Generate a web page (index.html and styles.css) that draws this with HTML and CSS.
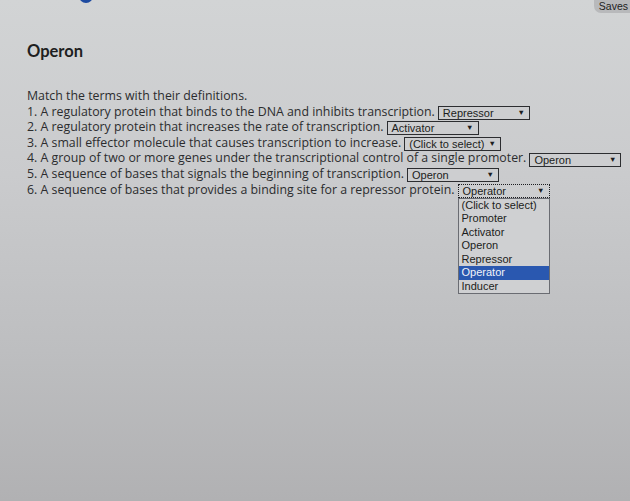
FILE: index.html
```html
<!DOCTYPE html>
<html>
<head>
<meta charset="utf-8">
<link rel="stylesheet" href="styles.css">
</head>
<body>
<div class="topbar">
  <div class="logo"></div>
  <div class="saved">Saves</div>
</div>
<main class="content">
  <h1 class="title">Operon</h1>
  <div class="question">
    <p class="line">Match the terms with their definitions.</p>
    <p class="line"><span>1. A regulatory protein that binds to the DNA and inhibits transcription.</span><span class="sel">Repressor<span class="arrow">&#9660;</span></span></p>
    <p class="line"><span>2. A regulatory protein that increases the rate of transcription.</span><span class="sel">Activator<span class="arrow">&#9660;</span></span></p>
    <p class="line"><span>3. A small effector molecule that causes transcription to increase.</span><span class="sel">(Click to select)<span class="arrow">&#9660;</span></span></p>
    <p class="line"><span>4. A group of two or more genes under the transcriptional control of a single promoter.</span><span class="sel">Operon<span class="arrow">&#9660;</span></span></p>
    <p class="line"><span>5. A sequence of bases that signals the beginning of transcription.</span><span class="sel">Operon<span class="arrow">&#9660;</span></span></p>
    <p class="line"><span>6. A sequence of bases that provides a binding site for a repressor protein.</span><span class="sel-wrap"><span class="sel focus">Operator<span class="arrow">&#9660;</span></span><span class="menu">
      <span class="opt">(Click to select)</span>
      <span class="opt">Promoter</span>
      <span class="opt">Activator</span>
      <span class="opt">Operon</span>
      <span class="opt">Repressor</span>
      <span class="opt active">Operator</span>
      <span class="opt">Inducer</span>
    </span></span></p>
  </div>
</main>
</body>
</html>
```

FILE: styles.css
```css
html, body {
  margin: 0;
  padding: 0;
  height: 100%;
  overflow: hidden;
}
body {
  background: linear-gradient(180deg, #d2d4d5 0%, #cacbcd 35%, #bdbec0 70%, #b1b1b3 100%);
  color: #2b2c2e;
  font-family: "Open Sans", "Noto Sans", sans-serif;
}
.topbar {
  display: flex;
  justify-content: space-between;
  align-items: flex-start;
  height: 14px;
  padding-left: 79px;
}
.logo {
  width: 14px;
  height: 14px;
  border-radius: 50%;
  background: #1d4aa0;
  margin-top: -11px;
}
.saved {
  background: #b8b9bb;
  border-radius: 0 0 0 7px;
  font-family: "Liberation Sans", Arial, sans-serif;
  font-size: 10.5px;
  line-height: 13px;
  height: 13px;
  padding: 0 2px 0 5px;
  color: #222;
}
.content {
  padding: 0 27px;
}
.title {
  margin: 27px 0 27px;
  font-family: "Lato", "Noto Sans", sans-serif;
  font-weight: 700;
  font-size: 16.5px;
  line-height: 20px;
  color: #1e1f21;
}
.question {
  font-size: 12.35px;
  line-height: 15.6px;
}
.line {
  margin: 0;
  height: 15.6px;
  display: flex;
  align-items: center;
  gap: 3px;
  white-space: nowrap;
}
.sel-wrap {
  position: relative;
  display: flex;
  margin-top: 3px;
}
.sel {
  display: inline-flex;
  justify-content: space-between;
  align-items: center;
  box-sizing: border-box;
  min-width: 92px;
  height: 14px;
  padding: 0 4px 0 4px;
  border: 1px solid #2c2d30;
  background: #cdced0;
  font-family: "Liberation Sans", Arial, sans-serif;
  font-size: 11px;
  line-height: 12px;
  color: #1c1d20;
  gap: 4px;
  margin-top: 3px;
}
.sel-wrap .sel {
  margin-top: 0;
}
.sel.focus {
  border: 1px dotted #1c1d20;
}
.arrow {
  font-size: 7.5px;
  line-height: 12px;
}
.menu {
  position: absolute;
  left: 0;
  top: 14px;
  width: 90px;
  display: flex;
  flex-direction: column;
  border: 1px solid #6a6c72;
  background: #cfd0d2;
  font-family: "Liberation Sans", Arial, sans-serif;
  font-size: 11px;
  line-height: 13.5px;
  color: #1c1d20;
}
.opt {
  padding: 0 3px;
}
.opt.active {
  background: #2a58b0;
  color: #f2f4f8;
}
```
